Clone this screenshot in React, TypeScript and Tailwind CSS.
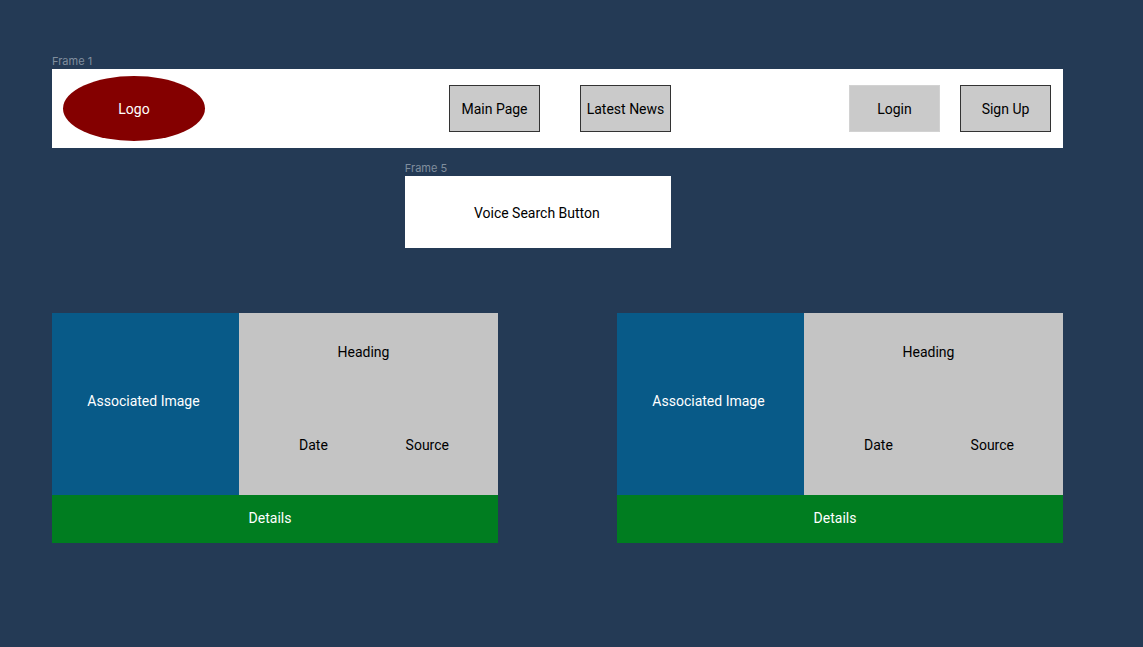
type NavButtonProps = { label: string; outlined?: boolean };

function NavButton({ label, outlined = true }: NavButtonProps) {
  return (
    <button
      type="button"
      className={
        outlined
          ? "h-[47px] w-[91px] border border-[#333333] bg-[#cacaca] whitespace-nowrap text-black"
          : "h-[47px] w-[91px] border border-[#d2d2d2] bg-[#cacaca] whitespace-nowrap text-black"
      }
    >
      {label}
    </button>
  );
}

function FrameLabel({ text }: { text: string }) {
  return (
    <p className="font-['Inter',sans-serif] text-[11px] leading-4 text-[#808e9e]">{text}</p>
  );
}

function NewsCard() {
  return (
    <article>
      <div className="grid h-[182px] grid-cols-[187fr_259fr]">
        <div className="flex items-center justify-center bg-[#085a88] pr-1 pb-1.5 text-white">
          Associated Image
        </div>
        <div className="flex flex-col justify-between bg-[#c4c4c4] pt-[29px] pb-10 text-black">
          <h2 className="pr-2.5 text-center">Heading</h2>
          <div className="flex justify-between pr-[49px] pl-[60px]">
            <span>Date</span>
            <span>Source</span>
          </div>
        </div>
      </div>
      <div className="flex h-12 items-center justify-center bg-[#007d20] pr-2.5 pb-0.5 text-white">
        Details
      </div>
    </article>
  );
}

export default function App() {
  return (
    <main className="min-h-screen bg-[#243a55] pt-[53px] pr-20 pb-16 pl-[52px] font-['Roboto',sans-serif] text-[14px] leading-5">
      <FrameLabel text="Frame 1" />
      <header className="grid h-[79px] grid-cols-[386fr_auto_380fr] items-center bg-white pr-3 pl-[11px]">
        <a
          href="#home"
          className="flex h-[65px] w-[142px] items-center justify-center rounded-[50%] bg-[#840000] text-white"
        >
          Logo
        </a>
        <nav className="flex gap-10">
          <NavButton label="Main Page" />
          <NavButton label="Latest News" />
        </nav>
        <div className="flex justify-end gap-5">
          <NavButton label="Login" outlined={false} />
          <NavButton label="Sign Up" />
        </div>
      </header>

      <section className="mt-3 ml-[34.9%] w-[266px]">
        <FrameLabel text="Frame 5" />
        <button type="button" className="h-[72px] w-full bg-white pt-0.5 pr-0.5 text-black">
          Voice Search Button
        </button>
      </section>

      <section className="mt-[65px] grid grid-cols-2 gap-[119px]">
        <NewsCard />
        <NewsCard />
      </section>
    </main>
  );
}
